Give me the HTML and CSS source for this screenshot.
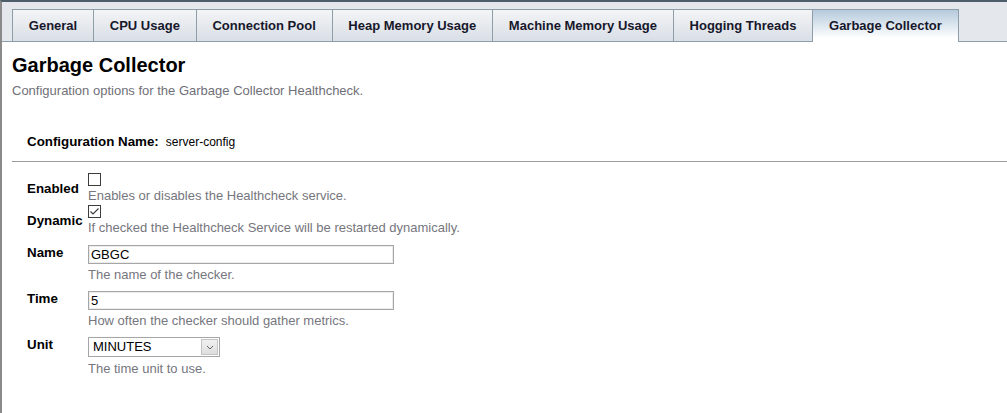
FILE: index.html
```html
<!DOCTYPE html>
<html lang="en">
<head>
<meta charset="utf-8">
<title>Garbage Collector</title>
<link rel="stylesheet" href="styles.css">
</head>
<body>
<div class="frame">
  <div class="tabbar">
    <div class="tab">General</div>
    <div class="tab">CPU Usage</div>
    <div class="tab">Connection Pool</div>
    <div class="tab">Heap Memory Usage</div>
    <div class="tab">Machine Memory Usage</div>
    <div class="tab">Hogging Threads</div>
    <div class="tab active">Garbage Collector</div>
  </div>
  <div class="content">
    <h1 class="title">Garbage Collector</h1>
    <p class="subtitle">Configuration options for the Garbage Collector Healthcheck.</p>
    <div class="config-row">
      <span class="config-label">Configuration Name:</span>
      <span class="config-value">server-config</span>
    </div>
    <div class="sep"></div>
    <div class="form">
      <div class="row row-check">
        <span class="label">Enabled</span>
        <div class="field">
          <span class="checkbox"></span>
          <div class="help">Enables or disables the Healthcheck service.</div>
        </div>
      </div>
      <div class="row row-check row-dynamic">
        <span class="label">Dynamic</span>
        <div class="field">
          <span class="checkbox checked"><svg viewBox="0 0 11 11" width="11" height="11"><polyline points="1.5,5.5 4,8 9.5,2.5" fill="none" stroke="#3a3a3a" stroke-width="1.1"/></svg></span>
          <div class="help">If checked the Healthcheck Service will be restarted dynamically.</div>
        </div>
      </div>
      <div class="row row-input row-name">
        <span class="label">Name</span>
        <div class="field">
          <input class="text-input" type="text" value="GBGC" readonly>
          <div class="help">The name of the checker.</div>
        </div>
      </div>
      <div class="row row-input">
        <span class="label">Time</span>
        <div class="field">
          <input class="text-input" type="text" value="5" readonly>
          <div class="help">How often the checker should gather metrics.</div>
        </div>
      </div>
      <div class="row row-input">
        <span class="label">Unit</span>
        <div class="field">
          <div class="select">
            <span class="select-value">MINUTES</span>
            <span class="select-arrow"><svg viewBox="0 0 8 5" width="8" height="5"><polyline points="1,1 4,4 7,1" fill="none" stroke="#666" stroke-width="1"/></svg></span>
          </div>
          <div class="help help-select">The time unit to use.</div>
        </div>
      </div>
    </div>
  </div>
</div>
</body>
</html>
```
FILE: styles.css
```css
* {
  box-sizing: border-box;
}

html, body {
  margin: 0;
  padding: 0;
  background: #ffffff;
}

body {
  font-family: "Liberation Sans", Arial, sans-serif;
  color: #000;
}

.frame {
  height: 413px;
  border-top: 2px solid #4c5e69;
  border-left: 2px solid #8a8a8a;
  background: #fff;
}

.tabbar {
  display: flex;
  align-items: flex-end;
  height: 40px;
  padding: 7px 0 0 10px;
  background: #e4e7eb;
  border-bottom: 1px solid #8e9ea8;
}

.tab {
  height: 32px;
  line-height: 31px;
  padding: 0 15.8px;
  border-top: 1px solid #8e9ea8;
  border-left: 1px solid #8e9ea8;
  background: linear-gradient(#f3f4f6, #d9dfe6);
  font-size: 13px;
  font-weight: bold;
  color: #17172b;
  white-space: nowrap;
}

.tab.active {
  height: 33px;
  margin-bottom: -1px;
  border-right: 1px solid #8e9ea8;
  background: linear-gradient(#b6cadd 0%, #d6e2ec 40%, #ffffff 88%);
  line-height: 31px;
}

.content {
  padding: 11px 0 0 10px;
}

.title {
  margin: 0;
  font-size: 20px;
  line-height: 24px;
  font-weight: bold;
  color: #000;
}

.subtitle {
  margin: 6px 0 0 0;
  font-size: 13px;
  line-height: 16px;
  color: #6f6f78;
}

.config-row {
  display: flex;
  align-items: baseline;
  gap: 7px;
  margin: 35px 0 0 15px;
  line-height: 16px;
}

.config-label {
  font-size: 13.33px;
  font-weight: bold;
}

.config-value {
  font-size: 12px;
}

.sep {
  height: 1px;
  margin-top: 11px;
  background: #9c9c9c;
}

.form {
  padding: 11px 0 0 15px;
}

.row {
  display: flex;
}

.label {
  width: 61px;
  flex: none;
  font-size: 13.33px;
  font-weight: bold;
  line-height: 16px;
}

.row-check .label {
  align-self: center;
}

.row-dynamic {
  margin-top: 1px;
}

.row-name {
  margin-top: 9px;
}

.row-input + .row-input {
  margin-top: 8px;
}

.field {
  display: flex;
  flex-direction: column;
  align-items: flex-start;
}

.checkbox {
  display: block;
  width: 13px;
  height: 13px;
  margin-bottom: 2px;
  border: 1px solid #3c3c3c;
  background: #fff;
}

.checkbox svg {
  display: block;
}

.help {
  font-size: 13px;
  line-height: 16px;
  color: #76767e;
}

.text-input {
  display: block;
  width: 306px;
  height: 19px;
  margin: 0 0 3px 0;
  padding: 0 2px;
  border: 1px solid #a6a6a6;
  box-shadow: inset 0 0 0 1px #ececec;
  font-family: "Liberation Sans", Arial, sans-serif;
  font-size: 13px;
  color: #000;
  background: #fff;
  outline: none;
}

.select {
  display: flex;
  align-items: stretch;
  width: 132px;
  height: 20px;
  margin-bottom: 4px;
  border: 1px solid #a6a6a6;
  background: #fff;
}

.select-value {
  flex: 1;
  padding-left: 4px;
  font-size: 13px;
  line-height: 18px;
  color: #000;
}

.select-arrow {
  display: flex;
  align-items: center;
  justify-content: center;
  width: 17px;
  margin: 1px;
  border: 1px solid #c4c4c4;
  background: linear-gradient(#f0f0f0, #dedede);
}

.select-arrow svg {
  display: block;
}
```
